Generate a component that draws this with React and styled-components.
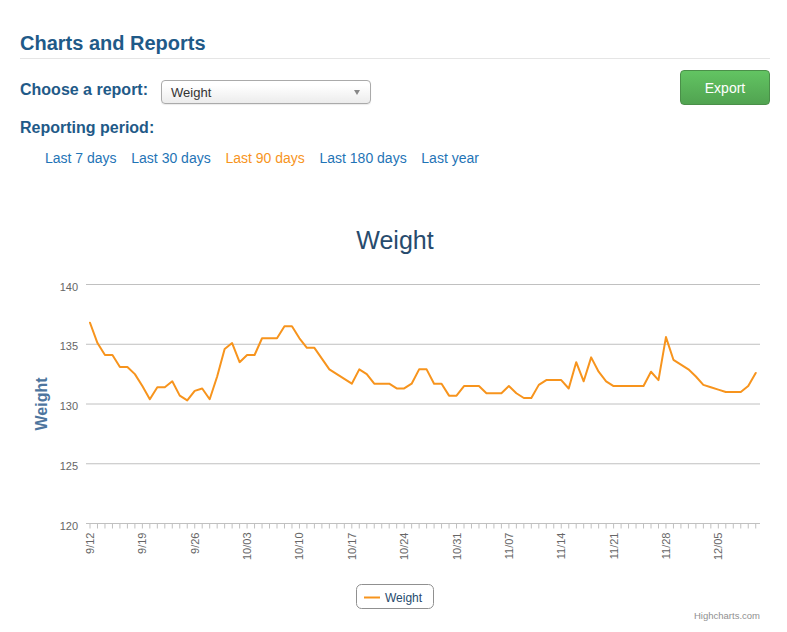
import React from 'react';
import styled, { createGlobalStyle } from 'styled-components';

const GlobalStyle = createGlobalStyle`
  body {
    margin: 0;
    background: #fff;
    font-family: "Liberation Sans", Arial, sans-serif;
  }
`;

const Page = styled.div`
  width: 750px;
  padding: 31px 20px 0;
`;

const Heading = styled.h1`
  margin: 0;
  font-size: 20px;
  line-height: 24px;
  font-weight: bold;
  color: #1f5a88;
  padding-bottom: 3px;
  border-bottom: 1px solid #e5e5e5;
`;

const ReportRow = styled.div`
  display: flex;
  align-items: flex-start;
  margin-top: 11px;
`;

const Label = styled.div`
  font-size: 16px;
  line-height: 20px;
  font-weight: bold;
  color: #1f5a88;
  margin-top: ${({ $offset }) => $offset || 0}px;
`;

const SelectBox = styled.div`
  position: relative;
  box-sizing: border-box;
  width: 210px;
  height: 24px;
  margin: 10px 0 0 13px;
  padding-left: 9px;
  border: 1px solid #aaa;
  border-radius: 4px;
  background: linear-gradient(#ffffff 20%, #ececec 100%);
  box-shadow: 0 1px 1px rgba(0, 0, 0, 0.08);
  font-size: 13px;
  line-height: 23px;
  color: #333;

  &::after {
    content: '';
    position: absolute;
    right: 10px;
    top: 9px;
    border-left: 3px solid transparent;
    border-right: 3px solid transparent;
    border-top: 5px solid #888;
  }
`;

const ExportButton = styled.button`
  margin-left: auto;
  width: 90px;
  height: 35px;
  border: 1px solid #4a8f49;
  border-radius: 4px;
  background: linear-gradient(#62c462, #51a351);
  color: #fff;
  font-family: "Liberation Sans", Arial, sans-serif;
  font-size: 14px;
  cursor: pointer;
`;

const PeriodList = styled.div`
  display: flex;
  gap: 14.7px;
  margin-top: 11px;
  padding-left: 25px;
`;

const PeriodLink = styled.a`
  font-size: 14px;
  line-height: 18px;
  color: ${({ $active }) => ($active ? '#f7941d' : '#1f74b6')};
  text-decoration: none;
  cursor: pointer;
`;

const ChartWrap = styled.div`
  margin-top: 18px;
  width: 750px;
  height: 447px;

  svg {
    display: block;
    font-family: "Liberation Sans", Arial, sans-serif;
  }
`;

const weights = [
  136.8, 135.1, 134.1, 134.1, 133.1, 133.1, 132.5, 131.5, 130.4, 131.4,
  131.4, 131.9, 130.7, 130.3, 131.1, 131.3, 130.4, 132.3, 134.6, 135.1,
  133.5, 134.1, 134.1, 135.5, 135.5, 135.5, 136.5, 136.5, 135.5, 134.7,
  134.7, 133.8, 132.9, 132.5, 132.1, 131.7, 132.9, 132.5, 131.7, 131.7,
  131.7, 131.3, 131.3, 131.7, 132.9, 132.9, 131.7, 131.7, 130.7, 130.7,
  131.5, 131.5, 131.5, 130.9, 130.9, 130.9, 131.5, 130.9, 130.5, 130.5,
  131.6, 132.0, 132.0, 132.0, 131.3, 133.5, 131.9, 133.9, 132.7, 131.9,
  131.5, 131.5, 131.5, 131.5, 131.5, 132.7, 132.0, 135.6, 133.7, 133.3,
  132.9, 132.3, 131.6, 131.4, 131.2, 131.0, 131.0, 131.0, 131.5, 132.6,
];

const PLOT_LEFT = 66;
const PLOT_RIGHT = 740;
const TOP_Y = 99.5; // y of 140
const UNIT = 11.95;
const FIRST_X = 70;
const STEP = 7.48;

const yOf = (v) => TOP_Y + (140 - v) * UNIT;
const xOf = (i) => FIRST_X + i * STEP;

const startDate = new Date(2013, 8, 12);
const dayLabel = (i) => {
  const d = new Date(startDate);
  d.setDate(d.getDate() + i);
  const day = String(d.getDate()).padStart(2, '0');
  return `${d.getMonth() + 1}/${day}`;
};

const WeightChart = () => {
  const ticks = [140, 135, 130, 125, 120];
  const axisY = yOf(120);
  const linePoints = weights.map((w, i) => `${xOf(i).toFixed(2)},${yOf(w).toFixed(2)}`).join(' ');

  return (
    <svg width="750" height="447" viewBox="0 0 750 447">
      <text x="375" y="64" textAnchor="middle" fontSize="25" fill="#274b6d">Weight</text>

      {ticks.map((t) => (
        <g key={t}>
          {t !== 120 && (
            <line x1={PLOT_LEFT} x2={PLOT_RIGHT} y1={yOf(t)} y2={yOf(t)} stroke="#c0c0c0" strokeWidth="1" />
          )}
          <text x="58" y={yOf(t) + 6} textAnchor="end" fontSize="11" fill="#666">{t}</text>
        </g>
      ))}

      <text
        x="26.5"
        y="219"
        textAnchor="middle"
        fontSize="16"
        fontWeight="bold"
        fill="#4d759e"
        transform="rotate(-90 26.5 219)"
      >
        Weight
      </text>

      <line x1={PLOT_LEFT} x2={PLOT_RIGHT} y1={axisY} y2={axisY} stroke="#c0c0c0" strokeWidth="1" />
      {weights.map((_, i) => (
        <line key={i} x1={xOf(i)} x2={xOf(i)} y1={axisY} y2={axisY + 5} stroke="#c0c0c0" strokeWidth="1" />
      ))}
      {weights.map((_, i) =>
        i % 7 === 0 ? (
          <text
            key={i}
            x={xOf(i) + 4}
            y={axisY + 9}
            textAnchor="end"
            fontSize="11"
            fill="#666"
            transform={`rotate(-90 ${xOf(i) + 4} ${axisY + 9})`}
          >
            {dayLabel(i)}
          </text>
        ) : null
      )}

      <polyline points={linePoints} fill="none" stroke="#f7941d" strokeWidth="2" strokeLinejoin="round" strokeLinecap="round" />

      <rect x="336.5" y="399.5" width="77" height="24" rx="5" fill="#fff" stroke="#909090" strokeWidth="1" />
      <line x1="344" x2="360" y1="412.5" y2="412.5" stroke="#f7941d" strokeWidth="2" />
      <text x="365" y="417.3" fontSize="12" fill="#274b6d">Weight</text>

      <text x="740" y="434.3" textAnchor="end" fontSize="9.5" fill="#909090">Highcharts.com</text>
    </svg>
  );
};

const periods = ['Last 7 days', 'Last 30 days', 'Last 90 days', 'Last 180 days', 'Last year'];

const App = () => (
  <>
    <GlobalStyle />
    <Page>
      <Heading>Charts and Reports</Heading>
      <ReportRow>
        <Label $offset={10}>Choose a report:</Label>
        <SelectBox>Weight</SelectBox>
        <ExportButton>Export</ExportButton>
      </ReportRow>
      <Label $offset={13}>Reporting period:</Label>
      <PeriodList>
        {periods.map((p) => (
          <PeriodLink key={p} $active={p === 'Last 90 days'}>{p}</PeriodLink>
        ))}
      </PeriodList>
      <ChartWrap>
        <WeightChart />
      </ChartWrap>
    </Page>
  </>
);

export default App;
